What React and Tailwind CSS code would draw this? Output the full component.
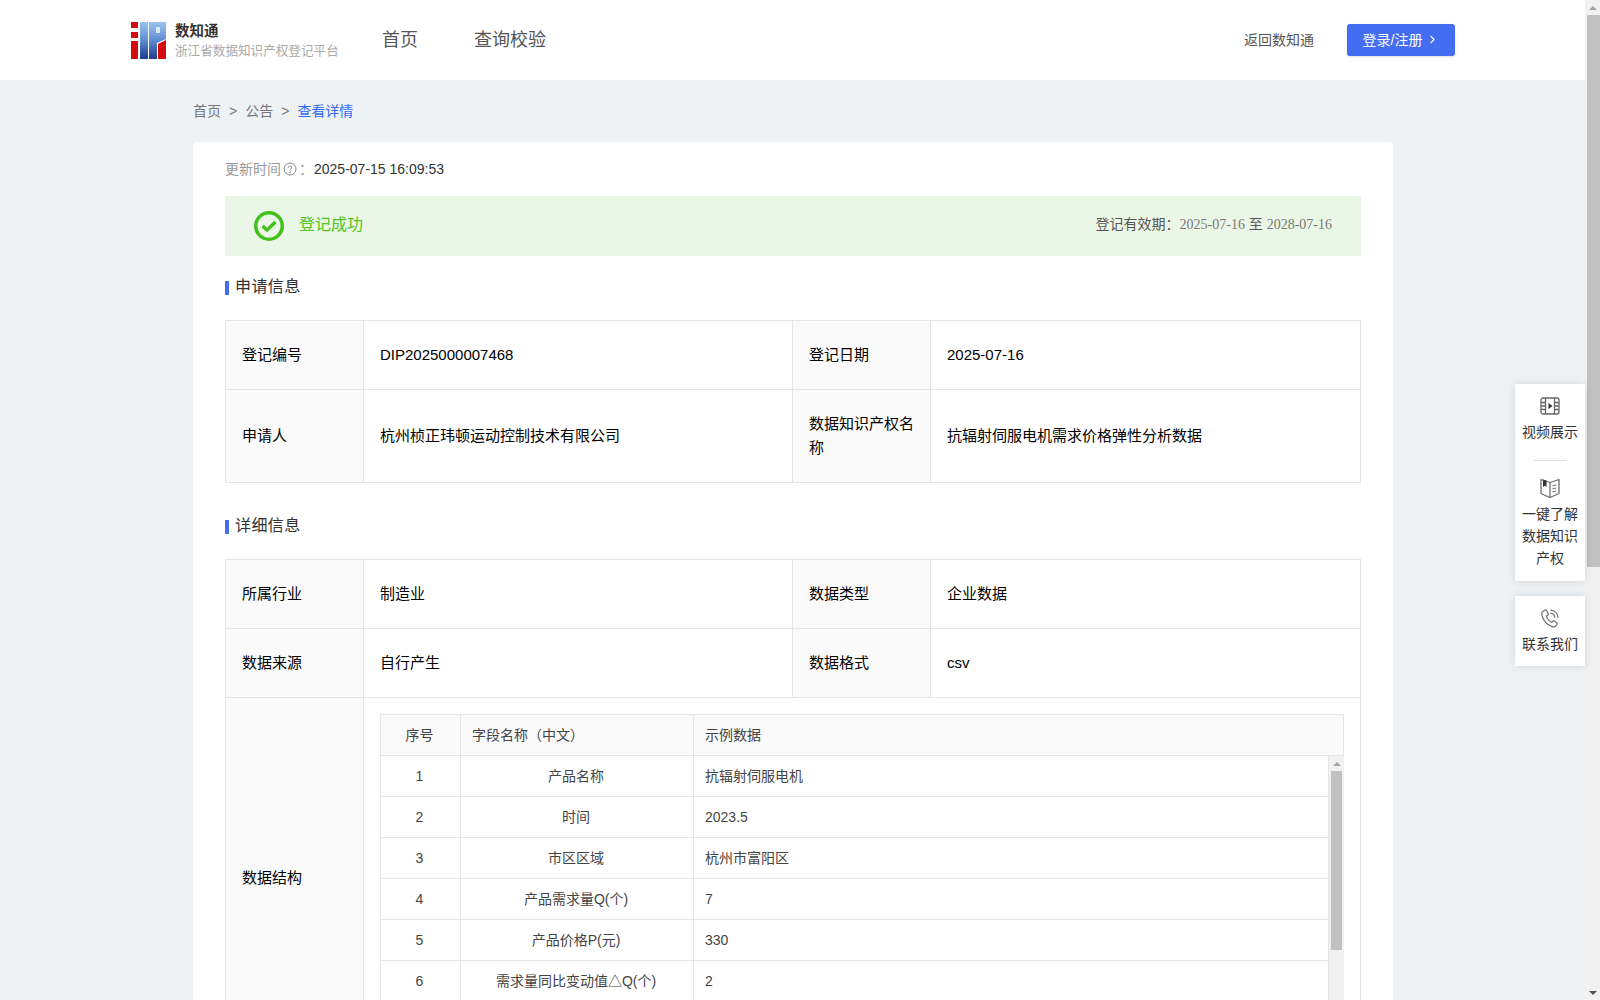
import React from "react";
import { ChevronRight } from "lucide-react";

const sans = "font-['Liberation_Sans','Noto_Sans_CJK_SC',sans-serif]";

const Logo = () => (
  <svg width="35" height="37" viewBox="0 0 35 37">
    <defs>
      <linearGradient id="logoBlue" x1="0" y1="0" x2="0" y2="1">
        <stop offset="0" stopColor="#9cc4ee" />
        <stop offset="0.5" stopColor="#5f8cd0" />
        <stop offset="1" stopColor="#1e3c8c" />
      </linearGradient>
    </defs>
    <rect x="0" y="0" width="7" height="6" fill="#d50a0f" />
    <rect x="0" y="10" width="7" height="6" fill="#d50a0f" />
    <rect x="0" y="19" width="7" height="18" fill="#d50a0f" />
    <rect x="9" y="0" width="8" height="37" fill="url(#logoBlue)" />
    <path d="M18 0h17v17l-9 4v16h-8z" fill="url(#logoBlue)" />
    <rect x="25" y="5" width="4" height="6" fill="#dbe8f8" />
    <path d="M27 37V22l8-4v19z" fill="#d50a0f" />
  </svg>
);

const FilmIcon = () => (
  <svg width="20" height="18" viewBox="0 0 20 18" fill="none" stroke="#666" strokeWidth="1.3">
    <rect x="1" y="1" width="18" height="16" rx="2" />
    <path d="M5.5 1v16M14.5 1v16M1 5.5h4.5M1 9h4.5M1 12.5h4.5M14.5 5.5H19M14.5 9H19M14.5 12.5H19" />
    <path d="M8.5 6l4 3-4 3z" fill="#333" stroke="none" />
  </svg>
);

const BookIcon = () => (
  <svg width="20" height="20" viewBox="0 0 20 20" fill="none" stroke="#707070" strokeWidth="1.3" strokeLinejoin="round">
    <path d="M1 1.5 10 4.5l9-3v14l-9 4-9-4z" />
    <path d="M10 4.5v15" />
    <path d="M3 1.5l3.5 1V9L4.800 7.500 3 9z" fill="#333" stroke="none" />
    <path d="M12.5 8l3.5-1M12.5 11l3.5-1M12.5 14l3.5-1" />
  </svg>
);

const PhoneIcon = () => (
  <svg width="20" height="20" viewBox="0 0 24 24" fill="none" stroke="#707070" strokeWidth="1.5" strokeLinecap="round">
    <path d="M6 2.5 3.5 4C2 5 1.8 7 2.5 9.5c1.500 5 6 10.500 11.500 12.500 2.500 1 4.500.5 5.500-1l1-1.500c.4-.7.2-1.300-.4-1.800l-3-2c-.6-.4-1.200-.3-1.700.2l-1.200 1.300c-2.800-1.200-5.500-4.200-6.500-7.500l1.600-1c.6-.4.8-1 .5-1.700L7.800 3C7.400 2.300 6.700 2.100 6 2.500z" />
    <path d="M13 2.500c4.500.2 8 3.700 8.500 8.500M13 6.500c2.500.2 4.300 2 4.500 4.500" />
  </svg>
);

const Cell = ({ head, children, className = "" }) => (
  <div
    className={`flex items-center px-4 text-[15px] leading-6 ${
      head ? "w-[138px] shrink-0 bg-[#fafafa]" : "flex-1"
    } ${className}`}
  >
    {children}
  </div>
);

const Row = ({ a, b, c, d, h = "h-[69px]" }) => (
  <div className={`flex border-b border-[#e5e5e5] text-black last:border-b-0 ${h}`}>
    <Cell head className="border-r border-[#e5e5e5]">{a}</Cell>
    <Cell className="w-[429px] flex-none border-r border-[#e5e5e5]">{b}</Cell>
    <Cell head className="border-r border-[#e5e5e5]">{c}</Cell>
    <Cell>{d}</Cell>
  </div>
);

const SectionTitle = ({ children }) => (
  <div className="flex items-center gap-[6px] text-base leading-6 tracking-[0.4px] text-[#333]">
    <span className="mt-[2px] h-[14px] w-1 bg-[#446ef2]" />
    {children}
  </div>
);

const fields = [
  ["1", "产品名称", "抗辐射伺服电机"],
  ["2", "时间", "2023.5"],
  ["3", "市区区域", "杭州市富阳区"],
  ["4", "产品需求量Q(个)", "7"],
  ["5", "产品价格P(元)", "330"],
  ["6", "需求量同比变动值△Q(个)", "2"],
];

const SideItem = ({ icon, children }) => (
  <div className="flex flex-col items-center">
    <div className="flex h-5 items-center">{icon}</div>
    <div className="mt-[5px] text-center text-sm leading-[22px] text-[#333]">{children}</div>
  </div>
);

export default function App() {
  return (
    <div className={`relative flex h-[1000px] w-full overflow-hidden bg-[#eff2f5] ${sans}`}>
      <div className="min-w-0 flex-1">
        {/* nav */}
        <header className="flex h-20 items-center bg-white pl-[131px] pr-[130px]">
          <Logo />
          <div className="ml-[10px] w-[207px] -translate-x-px">
            <div className="text-[14.5px] font-bold leading-5 text-[#333]">数知通</div>
            <div className="mt-px text-[12.6px] leading-[18px] text-[#aaa]">浙江省数据知识产权登记平台</div>
          </div>
          <nav className="flex -translate-x-px gap-14 text-lg text-[#555]">
            <a>首页</a>
            <a>查询校验</a>
          </nav>
          <a className="ml-auto -translate-x-px pb-px text-sm text-[#555]">返回数知通</a>
          <button className="ml-8 flex h-8 w-[108px] items-center justify-center gap-1 rounded-[3px] bg-[#446ef2] pb-px text-sm text-white shadow-sm">
            登录/注册
            <ChevronRight size={13} />
          </button>
        </header>

        <main className="mx-[193px] w-[1200px]">
          {/* breadcrumb */}
          <div className="flex h-[62px] items-center gap-[8px] pb-px text-sm text-[#777]">
            <span>首页</span>
            <span>&gt;</span>
            <span>公告</span>
            <span>&gt;</span>
            <span className="text-[#2f6bf0]">查看详情</span>
          </div>

          <section className="rounded-t-[4px] bg-white px-8 pt-4">
            <div className="flex h-[22px] items-center text-sm">
              <span className="text-[#999]">更新时间</span>
              <svg className="ml-[2px]" width="14" height="14" viewBox="0 0 14 14" fill="none" stroke="#888">
                <circle cx="7" cy="7" r="6" />
                <path d="M5.3 5.6a1.700 1.700 0 1 1 2.500 1.500c-.5.3-.8.6-.8 1.300" />
                <circle cx="7" cy="10.300" r=".4" fill="#888" />
              </svg>
              <span className="ml-[2px] text-[#999]">：</span>
              <span className="ml-[1px] text-[#333]">2025-07-15 16:09:53</span>
            </div>

            <div className="mt-[16px] flex h-[60px] items-center bg-[#ebf7e6] px-[29px]">
              <svg width="30" height="30" viewBox="0 0 30 30" fill="none" stroke="#43c01a">
                <circle cx="15" cy="15" r="13.250" strokeWidth="3.500" />
                <path d="M8.500 15l4.500 4 8.500-8" strokeWidth="3.500" />
              </svg>
              <span className="mb-[2px] ml-[15px] text-base text-[#52c41a]">登记成功</span>
              <div className="mb-[3px] ml-auto text-sm text-[#555]">
                登记有效期：
                <span className="font-['Liberation_Serif','Noto_Sans_CJK_SC',serif] text-[#777]">2025-07-16</span>
                {" 至 "}
                <span className="font-['Liberation_Serif','Noto_Sans_CJK_SC',serif] text-[#777]">2028-07-16</span>
              </div>
            </div>

            <div className="mt-[19px]">
              <SectionTitle>申请信息</SectionTitle>
            </div>
            <div className="mt-[21px] border border-[#e5e5e5]">
              <Row a="登记编号" b="DIP2025000007468" c="登记日期" d="2025-07-16" />
              <Row
                a="申请人"
                b="杭州桢正玮顿运动控制技术有限公司"
                c="数据知识产权名称"
                d="抗辐射伺服电机需求价格弹性分析数据"
                h="h-[92px]"
              />
            </div>

            <div className="mt-[31px]">
              <SectionTitle>详细信息</SectionTitle>
            </div>
            <div className="mt-[21px] border border-b-0 border-[#e5e5e5]">
              <Row a="所属行业" b="制造业" c="数据类型" d="企业数据" />
              <Row a="数据来源" b="自行产生" c="数据格式" d="csv" />
              <div className="flex h-[359px] text-black">
                <Cell head className="border-r border-[#e5e5e5]">数据结构</Cell>
                <div className="flex-1 p-4">
                  {/* inner table */}
                  <div className="border-l border-t border-[#e5e5e5] text-sm text-[#444]">
                    <div className="flex h-[41px] border-b border-r border-[#e5e5e5] bg-[#fafafa]">
                      <div className="flex w-[80px] items-center justify-center border-r border-[#e5e5e5] pr-[2px]">序号</div>
                      <div className="flex w-[233px] items-center border-r border-[#e5e5e5] pl-[11px]">字段名称（中文）</div>
                      <div className="flex flex-1 items-center pl-[11px]">示例数据</div>
                    </div>
                    <div className="flex">
                      <div className="flex-1">
                        {fields.map(([no, name, sample]) => (
                          <div key={no} className="flex h-[41px] border-b border-[#e5e5e5]">
                            <div className="flex w-[80px] items-center justify-center border-r border-[#e5e5e5] pr-[2px]">{no}</div>
                            <div className="flex w-[233px] items-center justify-center border-r border-[#e5e5e5] pr-[2px]">{name}</div>
                            <div className="flex flex-1 items-center border-r border-[#e5e5e5] pl-[11px]">{sample}</div>
                          </div>
                        ))}
                      </div>
                      {/* table scrollbar */}
                      <div className="flex w-[15px] flex-col bg-[#f1f1f1] pl-[2px]">
                        <div className="flex h-[15px] items-center justify-center pr-[2px]">
                          <span className="border-x-4 border-b-4 border-x-transparent border-b-[#a3a3a3]" />
                        </div>
                        <div className="h-[179px] w-[11px] bg-[#c1c1c1]" />
                      </div>
                    </div>
                  </div>
                </div>
              </div>
            </div>
          </section>
        </main>
      </div>

      {/* page scrollbar */}
      <div className="flex w-[15px] shrink-0 flex-col bg-[#f1f1f1] pl-[2px]">
        <div className="flex h-[15px] items-center justify-center pr-[2px]">
          <span className="border-x-4 border-b-4 border-x-transparent border-b-[#a3a3a3]" />
        </div>
        <div className="h-[552px] w-[13px] bg-[#c1c1c1]" />
        <div className="mt-auto flex h-[15px] items-center justify-center pr-[2px]">
          <span className="border-x-4 border-t-4 border-x-transparent border-t-[#505050]" />
        </div>
      </div>

      {/* floating side tools */}
      <div className="absolute left-[1515px] top-[384px] w-[70px]">
        <div className="bg-white px-[5px] pb-[12px] pt-[12px] shadow-[0_0_8px_rgba(0,0,0,0.12)]">
          <SideItem icon={<FilmIcon />}>视频展示</SideItem>
          <div className="mx-[14px] mb-[17px] mt-[17px] h-px bg-[#e0e0e0]" />
          <SideItem icon={<BookIcon />}>
            一键了解
            <br />
            数据知识
            <br />
            产权
          </SideItem>
        </div>
        <div className="mt-[15px] bg-white px-[5px] pb-[11px] pt-[12px] shadow-[0_0_8px_rgba(0,0,0,0.12)]">
          <SideItem icon={<PhoneIcon />}>联系我们</SideItem>
        </div>
      </div>
    </div>
  );
}
